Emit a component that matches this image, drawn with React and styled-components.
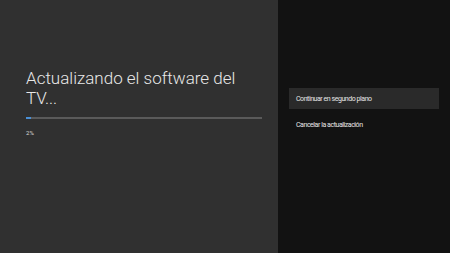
import styled, { createGlobalStyle } from "styled-components";

let GlobalStyle = createGlobalStyle`
  html, body {
    margin: 0;
    padding: 0;
    background: #121212;
  }
  body {
    font-family: Roboto, "Noto Sans", sans-serif;
  }
`;

let Screen = styled.div`
  display: flex;
  width: 450px;
  height: 253px;
  overflow: hidden;
`;

let Main = styled.div`
  width: 278px;
  flex-shrink: 0;
  background: #303030;
  box-sizing: border-box;
  padding: 68px 16px 0 26px;
  display: flex;
  flex-direction: column;
`;

let Title = styled.h1`
  margin: 0;
  font-weight: 300;
  font-size: 17px;
  line-height: 20px;
  color: #e8e8e8;
`;

let Track = styled.div`
  margin-top: 9px;
  height: 2px;
  background: #5a5a5a;
  width: 236px;
`;

let Fill = styled.div`
  height: 100%;
  background: #4a90d6;
`;

let Percent = styled.div`
  margin-top: 10px;
  font-size: 6px;
  line-height: 7px;
  color: #d8d8d8;
`;

let Side = styled.div`
  flex: 1;
  background: #121212;
  box-sizing: border-box;
  padding: 88px 11px 0 11px;
  display: flex;
  flex-direction: column;
`;

let Option = styled.div`
  height: 21px;
  display: flex;
  align-items: center;
  padding-left: 7px;
  margin-bottom: 5px;
  font-size: 7px;
  letter-spacing: -0.45px;
  color: #e6e6e6;
  background: ${(p) => (p.selected ? "#2a2a2a" : "transparent")};
`;

let App = () => {
  let progress = 2;
  return (
    <>
      <GlobalStyle />
      <Screen>
        <Main>
          <Title>
            Actualizando el software del
            <br />
            TV...
          </Title>
          <Track>
            <Fill style={{ width: `${progress}%` }} />
          </Track>
          <Percent>{progress}%</Percent>
        </Main>
        <Side>
          <Option selected>Continuar en segundo plano</Option>
          <Option>Cancelar la actualización</Option>
        </Side>
      </Screen>
    </>
  );
};

export default App;
